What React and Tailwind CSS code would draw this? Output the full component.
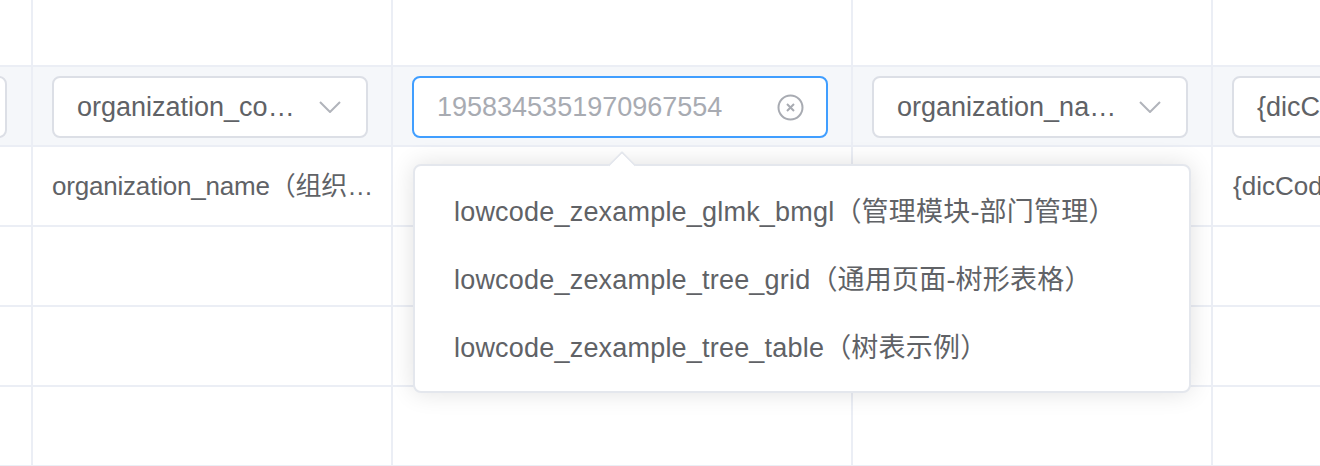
import React from "react";

const FONT = '"Liberation Sans", "Noto Sans CJK SC", Arial, sans-serif';

const ChevronDown = () => (
  <svg width="22" height="12" viewBox="0 0 22 12" fill="none" className="shrink-0">
    <path d="M1 1 L11 11 L21 1" stroke="#b1b4bb" strokeWidth="2" />
  </svg>
);

const CircleClose = () => (
  <svg width="27" height="27" viewBox="0 0 27 27" fill="none" className="shrink-0">
    <circle cx="13.5" cy="13.5" r="12" stroke="#a8abb2" strokeWidth="2" />
    <path d="M10 10 L17 17 M17 10 L10 17" stroke="#a8abb2" strokeWidth="2" />
  </svg>
);

// select box in the edit row
const SelectBox = ({ value, width = "w-[316px]", focused = false, placeholder, clearable }) => (
  <div
    className={`${width} h-[62px] shrink-0 rounded-[8px] bg-white border-2 flex items-center gap-[18px] pl-[23px] ${
      focused ? "border-[#409eff] pr-[22px]" : "border-[#dcdfe6] pr-[25px]"
    }`}
  >
    <span
      className={`flex-1 min-w-0 truncate text-[27px] ${value ? "text-[#606266]" : "text-[#a8abb2]"}`}
    >
      {value || placeholder}
    </span>
    {clearable ? <CircleClose /> : <ChevronDown />}
  </div>
);

const options = [
  "lowcode_zexample_glmk_bmgl（管理模块-部门管理）",
  "lowcode_zexample_tree_grid（通用页面-树形表格）",
  "lowcode_zexample_tree_table（树表示例）",
];

const Cell = ({ children, className = "" }) => (
  <div className={`border-r-2 border-[#ebeef5] overflow-hidden ${className}`}>{children}</div>
);

const EmptyRow = ({ h = "h-[80px]" }) => (
  <div className={`grid grid-cols-[33px_360px_460px_360px_1fr] ${h} border-b-2 border-[#ebeef5]`}>
    <Cell />
    <Cell />
    <Cell />
    <Cell />
    <div />
  </div>
);

export default function App() {
  return (
    <div className="w-[1320px] h-[466px] bg-white overflow-hidden" style={{ fontFamily: FONT }}>
      <EmptyRow h="h-[67px]" />

      {/* editing row */}
      <div className="grid grid-cols-[33px_360px_460px_360px_1fr] h-[80px] border-b-2 border-[#ebeef5] bg-[#f5f7fa]">
        <Cell className="flex justify-end pr-[24px] pt-[9px]">
          <SelectBox value="organization_code" />
        </Cell>
        <Cell className="pl-[19px] pt-[9px]">
          <SelectBox value="organization_code（组织编码）" />
        </Cell>
        <Cell className="pl-[19px] pt-[9px] overflow-visible">
          <div className="relative w-[416px]">
            <SelectBox width="w-[416px]" focused placeholder="1958345351970967554" clearable />
            <div className="absolute z-10 left-[1px] top-[88px] w-[778px] h-[229px] bg-white border-2 border-[#e4e7ed] rounded-[8px] shadow-[0_0_24px_rgba(0,0,0,0.12)] py-[12px]">
              <div className="absolute -top-[11px] left-[197px] w-[20px] h-[20px] bg-white border-t-2 border-l-2 border-[#e4e7ed] rotate-45 rounded-tl-[2px]" />
              {options.map((o) => (
                <div key={o} className="h-[68px] leading-[68px] pl-[39px] pr-[64px] text-[27px] tracking-[0.2px] text-[#606266] whitespace-nowrap">
                  {o}
                </div>
              ))}
            </div>
          </div>
        </Cell>
        <Cell className="pl-[19px] pt-[9px]">
          <SelectBox value="organization_name（组织名称）" />
        </Cell>
        <div className="pl-[19px] pt-[9px] overflow-hidden">
          <SelectBox value="{dicCode}" />
        </div>
      </div>

      {/* data row */}
      <div className="grid grid-cols-[33px_360px_460px_360px_1fr] h-[80px] border-b-2 border-[#ebeef5]">
        <Cell />
        <Cell className="flex items-center pl-[19px] pr-[12px]">
          <span className="truncate text-[26px] tracking-[-0.2px] text-[#606266]">organization_name（组织名称）</span>
        </Cell>
        <Cell />
        <Cell />
        <div className="flex items-center pl-[20px] overflow-hidden">
          <span className="whitespace-nowrap text-[26px] text-[#606266]">{"{dicCode}"}</span>
        </div>
      </div>

      <EmptyRow />
      <EmptyRow />
      <EmptyRow />
    </div>
  );
}
